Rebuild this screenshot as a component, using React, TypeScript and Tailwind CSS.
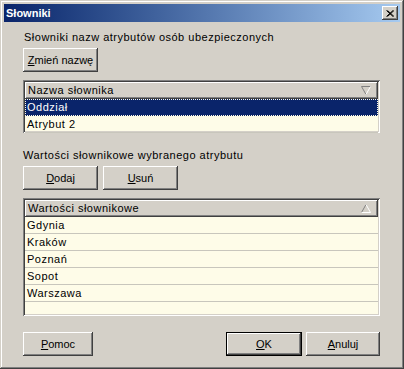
const raised =
  "shadow-[inset_-1px_-1px_#404040,inset_1px_1px_#ffffff,inset_-2px_-2px_#808080,inset_2px_2px_#d4d0c8]";
const sunken =
  "shadow-[inset_1px_1px_#808080,inset_-1px_-1px_#ffffff,inset_2px_2px_#404040,inset_-2px_-2px_#d4d0c8]";

const Btn = ({
  label,
  mnemonic,
  width,
  isDefault = false,
}: {
  label: string;
  mnemonic: number;
  width: string;
  isDefault?: boolean;
}) => {
  const before = label.slice(0, mnemonic);
  const key = label.charAt(mnemonic);
  const after = label.slice(mnemonic + 1);
  const inner = (
    <div className={`flex h-full items-center justify-center bg-[#d4d0c8] tracking-normal text-black ${raised}`}>
      <span>
        {before}
        <span className="underline underline-offset-1">{key}</span>
        {after}
      </span>
    </div>
  );
  if (isDefault) {
    return <div className={`${width} h-[24px] border border-black`}>{inner}</div>;
  }
  return <div className={`${width} h-[24px]`}>{inner}</div>;
};

const SortArrow = ({ up }: { up?: boolean }) => (
  <svg width="10" height="9" viewBox="0 0 10 9">
    {up ? (
      <>
        <path d="M0.5 8.5 L5 0.5" stroke="#808080" strokeWidth="1" fill="none" />
        <path d="M5 0.5 L9.5 8.5 L0.5 8.5" stroke="#ffffff" strokeWidth="1" fill="none" />
      </>
    ) : (
      <>
        <path d="M0.5 0.5 L9.5 0.5 M0.5 0.5 L5 8.5" stroke="#808080" strokeWidth="1" fill="none" />
        <path d="M5 8.5 L9.5 0.5" stroke="#ffffff" strokeWidth="1" fill="none" />
      </>
    )}
  </svg>
);

const ListHeader = ({ title, up }: { title: string; up?: boolean }) => (
  <div className={`flex h-[17px] shrink-0 items-center justify-between bg-[#d4d0c8] pl-[3px] pr-[7px] ${raised}`}>
    <span>{title}</span>
    <SortArrow up={up} />
  </div>
);

const Row = ({ text, selected }: { text: string; selected?: boolean }) =>
  selected ? (
    <div className="h-[17px] shrink-0 bg-[#0a246a] text-white outline-1 outline-dotted outline-offset-[-1px] outline-[#fefce8] pl-[2px] leading-[17px]">
      {text}
    </div>
  ) : (
    <div className="h-[17px] shrink-0 border-b border-[#c8c6bc] pl-[2px] leading-[16px]">{text}</div>
  );

export default function App() {
  const values = ["Gdynia", "Kraków", "Poznań", "Sopot", "Warszawa"];

  return (
    <div
      className={`flex h-[369px] w-[404px] flex-col bg-[#d4d0c8] p-[4px] text-[11px] tracking-[0.5px] text-black shadow-[inset_-1px_-1px_#404040,inset_1px_1px_#d4d0c8,inset_-2px_-2px_#808080,inset_2px_2px_#ffffff]`}
      style={{ fontFamily: '"Liberation Sans", Arial, sans-serif' }}
    >
      <div className="flex h-[18px] shrink-0 items-center justify-between bg-gradient-to-r from-[#0a246a] to-[#a6caf0] pl-[2px] pr-[2px]">
        <span className="font-bold tracking-normal text-white">Słowniki</span>
        <div className={`flex h-[14px] w-[16px] items-center justify-center bg-[#d4d0c8] ${raised}`}>
          <svg width="8" height="7" viewBox="0 0 8 7">
            <path d="M0.5 0.5 L7 6.5 M1.5 0.5 L8 6.5 M7 0.5 L0.5 6.5 M8 0.5 L1.5 6.5" stroke="#000" strokeWidth="1" />
          </svg>
        </div>
      </div>

      <div className="flex flex-1 flex-col pl-[19px] pr-[20px]">
        <div className="mt-[9px] h-[13px] leading-[13px] pl-[1px]">Słowniki nazw atrybutów osób ubezpieczonych</div>
        <div className="mt-[4px]">
          <Btn label="Zmień nazwę" mnemonic={0} width="w-[75px]" />
        </div>

        <div className={`mt-[8px] flex h-[53px] flex-col bg-[#fefce8] p-[2px] ${sunken}`}>
          <ListHeader title="Nazwa słownika" />
          <Row text="Oddział" selected />
          <Row text="Atrybut 2" />
        </div>

        <div className="mt-[16px] h-[13px] leading-[13px]">Wartości słownikowe wybranego atrybutu</div>
        <div className="mt-[4px] flex gap-[5px]">
          <Btn label="Dodaj" mnemonic={0} width="w-[75px]" />
          <Btn label="Usuń" mnemonic={0} width="w-[75px]" />
        </div>

        <div className={`mt-[8px] flex h-[118px] flex-col bg-[#fefce8] p-[2px] ${sunken}`}>
          <ListHeader title="Wartości słownikowe" up />
          {values.map((v) => (
            <Row key={v} text={v} />
          ))}
        </div>

        <div className="mt-[16px] flex items-center justify-between">
          <Btn label="Pomoc" mnemonic={0} width="w-[70px]" />
          <div className="flex gap-[4px]">
            <Btn label="OK" mnemonic={0} width="w-[76px]" isDefault />
            <Btn label="Anuluj" mnemonic={0} width="w-[74px]" />
          </div>
        </div>
      </div>
    </div>
  );
}
